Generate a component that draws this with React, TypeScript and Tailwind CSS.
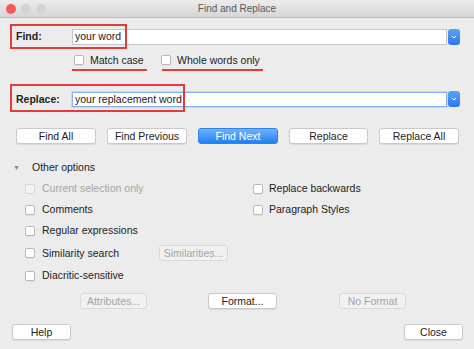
import React from "react";

function Check({ disabled = false }: { disabled?: boolean }) {
  return (
    <span
      className={
        "inline-block w-[10px] h-[10px] shrink-0 rounded-[2px] border " +
        (disabled
          ? "bg-[#f3f3f3] border-[#d6d6d6]"
          : "bg-white border-[#b9b9b9] shadow-[0_1px_0_rgba(0,0,0,0.05)]")
      }
    />
  );
}

function Btn({
  children,
  w,
  disabled = false,
  primary = false,
}: {
  children: React.ReactNode;
  w: string;
  disabled?: boolean;
  primary?: boolean;
}) {
  if (primary) {
    return (
      <div
        className={
          w +
          " h-[16px] rounded-[3px] flex items-center justify-center text-white bg-gradient-to-b from-[#6eb2fb] to-[#1c7ff5] border border-[#2f82ea]"
        }
      >
        {children}
      </div>
    );
  }
  return (
    <div
      className={
        w +
        " h-[16px] rounded-[3px] flex items-center justify-center border " +
        (disabled
          ? "bg-[#f1f1f1] border-[#d9d9d9] text-[#a3a3a3]"
          : "bg-white border-[#c9c9c9] text-[#222] shadow-[0_1px_0_rgba(0,0,0,0.08)]")
      }
    >
      {children}
    </div>
  );
}

function Dropdown() {
  return (
    <div className="w-[12px] h-[16px] ml-[1px] rounded-[3px] bg-gradient-to-b from-[#5aa3f8] to-[#2a78ee] flex items-center justify-center">
      <svg width="6" height="4" viewBox="0 0 6 4">
        <path d="M0.8 0.8 L3 3 L5.2 0.8" stroke="white" strokeWidth="1" fill="none" />
      </svg>
    </div>
  );
}

export default function App() {
  return (
    <div className="w-[474px] h-[349px] bg-[#ececec] overflow-hidden flex flex-col font-['Liberation_Sans',Arial,sans-serif] text-[10.5px] text-[#222] leading-none">
      {/* Title bar */}
      <div className="relative h-[18px] shrink-0 bg-gradient-to-b from-[#ececec] to-[#d6d6d6] border-b border-[#bdbdbd] flex items-center pl-[6px] gap-[5px]">
        <span className="w-[10px] h-[10px] rounded-full bg-[#f25a55]" />
        <span className="w-[10px] h-[10px] rounded-full bg-[#d3d3d3]" />
        <span className="w-[10px] h-[10px] rounded-full bg-[#d3d3d3]" />
        <div className="absolute inset-0 flex items-center justify-center text-[10px] text-[#5a5a5a]">
          Find and Replace
        </div>
      </div>

      {/* Find row */}
      <div className="relative mt-[6px] h-[25px] flex items-center pl-[16px] pr-[14px]">
        <div className="w-[56px] font-bold">Find:</div>
        <div className="flex-1 h-[16px] bg-white border border-[#c6c6c6] flex items-center pl-[2px]">your word</div>
        <Dropdown />
        <div className="absolute left-[10px] top-0 w-[117px] h-[25px] border-2 border-[#e53b3b]" />
      </div>

      {/* Checkbox row */}
      <div className="relative mt-[5px] h-[12px] flex items-center pl-[74px]">
        <div className="w-[87px] flex items-center gap-[6px]">
          <Check />
          <span>Match case</span>
        </div>
        <div className="flex items-center gap-[6px]">
          <Check />
          <span>Whole words only</span>
        </div>
        <div className="absolute left-[72px] top-[15px] w-[75px] h-[2px] bg-[#e53b3b]" />
        <div className="absolute left-[162px] top-[15px] w-[101px] h-[2px] bg-[#e53b3b]" />
      </div>

      {/* Replace row */}
      <div className="relative mt-[18px] h-[28px] flex items-center pl-[16px] pr-[14px] pt-[2px]">
        <div className="w-[56px] font-bold">Replace:</div>
        <div className="flex-1 h-[15px] bg-white border border-[#86b1ec] shadow-[0_0_0_1px_#c2d8f6] flex items-center pl-[2px]">
          your replacement word
        </div>
        <Dropdown />
        <div className="absolute left-[10px] top-0 w-[175px] h-[28px] border-2 border-[#e53b3b]" />
      </div>

      {/* Buttons row */}
      <div className="mt-[16px] flex pl-[16px] gap-[11px]">
        <Btn w="w-[80px]">Find All</Btn>
        <Btn w="w-[80px]">Find Previous</Btn>
        <Btn w="w-[80px]" primary>
          Find Next
        </Btn>
        <Btn w="w-[79px]">Replace</Btn>
        <Btn w="w-[80px]">Replace All</Btn>
      </div>

      {/* Other options */}
      <div className="mt-[17px] h-[12px] flex items-center pl-[13px]">
        <span className="w-[19px] text-[7px] text-[#8a8a8a]">▼</span>
        <span>Other options</span>
      </div>

      <div className="mt-[5px] grid grid-cols-[228px_1fr]">
        <div className="flex flex-col">
          <div className="h-[21px] flex items-center pl-[25px] gap-[7px] text-[#a5a5a5]">
            <Check disabled />
            <span>Current selection only</span>
          </div>
          <div className="h-[21px] flex items-center pl-[25px] gap-[7px]">
            <Check />
            <span>Comments</span>
          </div>
          <div className="h-[21px] flex items-center pl-[25px] gap-[7px]">
            <Check />
            <span>Regular expressions</span>
          </div>
          <div className="h-[24px] flex items-center pl-[25px]">
            <div className="w-[140px] flex items-center gap-[7px]">
              <Check />
              <span>Similarity search</span>
            </div>
            <Btn w="w-[72px]" disabled>
              Similarities...
            </Btn>
          </div>
          <div className="h-[21px] flex items-center pl-[25px] gap-[7px]">
            <Check />
            <span>Diacritic-sensitive</span>
          </div>
        </div>
        <div className="flex flex-col">
          <div className="h-[21px] flex items-center pl-[25px] gap-[6px]">
            <Check />
            <span>Replace backwards</span>
          </div>
          <div className="h-[21px] flex items-center pl-[25px] gap-[6px]">
            <Check />
            <span>Paragraph Styles</span>
          </div>
        </div>
      </div>

      {/* Attributes row */}
      <div className="mt-[7px] flex pl-[80px]">
        <Btn w="w-[67px]" disabled>
          Attributes...
        </Btn>
        <div className="ml-[61px]">
          <Btn w="w-[69px]">Format...</Btn>
        </div>
        <div className="ml-[62px]">
          <Btn w="w-[67px]" disabled>
            No Format
          </Btn>
        </div>
      </div>

      {/* Bottom row */}
      <div className="mt-[15px] flex justify-between pl-[12px] pr-[11px]">
        <Btn w="w-[59px]">Help</Btn>
        <Btn w="w-[59px]">Close</Btn>
      </div>
    </div>
  );
}
